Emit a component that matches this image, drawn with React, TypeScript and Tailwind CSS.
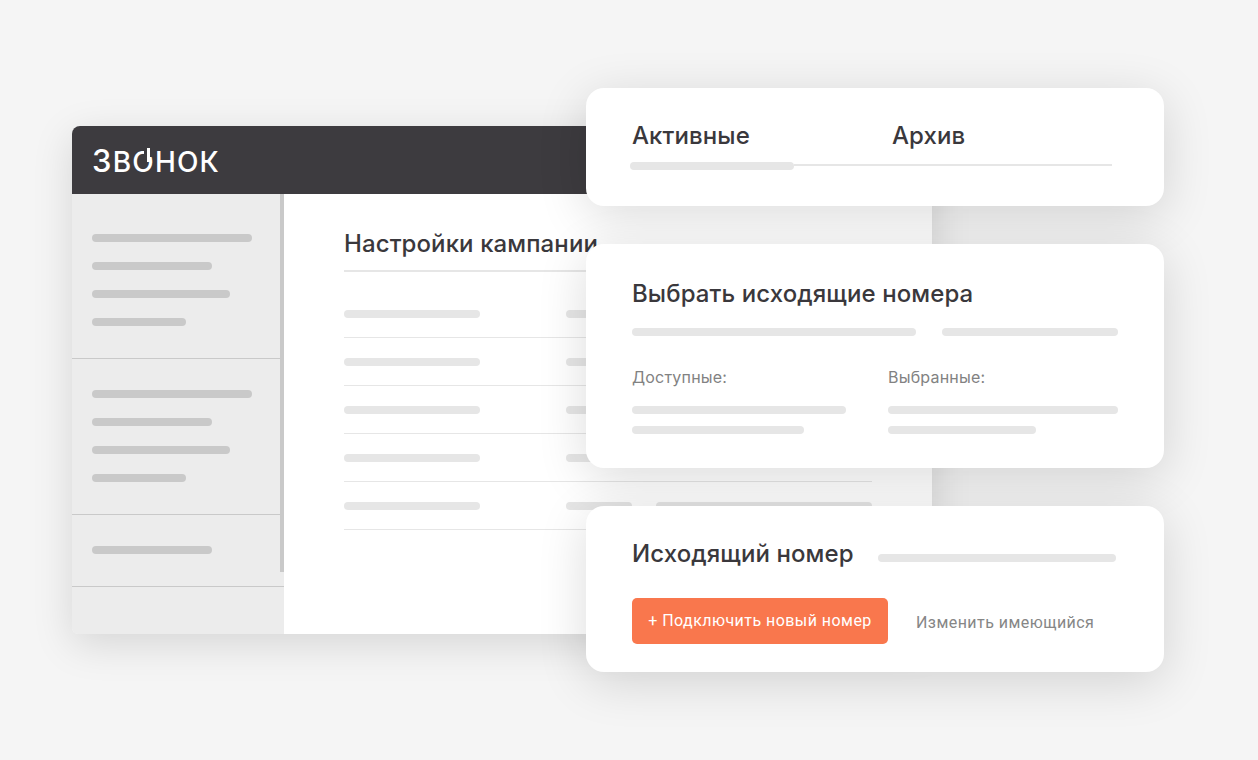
import * as React from "react"

function Bar({ className }: { className: string }) {
  return <div className={`h-2 rounded-full ${className}`} />
}

// sidebar skeleton
function SideGroup({ widths, first }: { widths: string[]; first?: boolean }) {
  return (
    <div className={`flex flex-col gap-5 pl-5 pb-8 ${first ? "pt-10" : "pt-[31px]"}`}>
      {widths.map((w, i) => (
        <Bar key={i} className={`bg-[#c9c9c9] ${w}`} />
      ))}
    </div>
  )
}

function Logo() {
  return (
    <div className="relative ml-5 mt-0.5 h-8 w-[128px] whitespace-nowrap text-[28px] leading-8 font-medium tracking-[1.2px] text-white font-['Inter',sans-serif]">
      <span className="text-[31px]">З</span>ВОНОК
      {/* power symbol on the first O */}
      <span className="absolute left-[52px] top-0 h-3 w-[9px] bg-[#3d3b3f]" />
      <span className="absolute left-[55px] top-[3px] h-[14px] w-[3px] bg-white" />
    </div>
  )
}

function Row() {
  return (
    <div className="flex h-12 border-b border-[#e6e6e6] pt-5">
      <Bar className="w-[136px] bg-[#e6e6e6]" />
      <Bar className="ml-[86px] w-[66px] bg-[#e6e6e6]" />
      <Bar className="ml-6 w-[216px] bg-[#e6e6e6]" />
    </div>
  )
}

function Card({ className, children }: { className: string; children: React.ReactNode }) {
  return (
    <div className={`rounded-[18px] bg-white pl-[46px] shadow-[0_10px_50px_rgba(0,0,0,0.14)] ${className}`}>
      {children}
    </div>
  )
}

const heading = "text-2xl leading-7 font-[550] tracking-[0.1px] text-[#3a383c]"

export default function App() {
  return (
    <div className="relative h-[760px] w-[1258px] overflow-hidden bg-[#f5f5f5] font-['Inter',sans-serif]">
      {/* app window */}
      <div className="absolute left-[72px] top-[126px] flex h-[508px] w-[860px] flex-col overflow-hidden rounded-t-lg rounded-b-md shadow-[0_10px_40px_rgba(0,0,0,0.13)]">
        <div className="flex h-[68px] flex-none items-center bg-[#3d3b3f]">
          <Logo />
        </div>
        <div className="flex flex-1">
          <div className="relative w-[212px] flex-none bg-[#ececec]">
            <div className="h-[165px] border-b border-[#c9c9c9]">
              <SideGroup first widths={["w-40", "w-[120px]", "w-[138px]", "w-[94px]"]} />
            </div>
            <div className="h-[156px] border-b border-[#c9c9c9]">
              <SideGroup widths={["w-40", "w-[120px]", "w-[138px]", "w-[94px]"]} />
            </div>
            <div className="h-[72px] border-b border-[#c9c9c9]">
              <SideGroup widths={["w-[120px]"]} />
            </div>
            {/* scrollbar */}
            <div className="absolute right-0 top-0 h-[378px] w-1 bg-[#c9c9c9]" />
          </div>
          <div className="flex-1 bg-white pl-[60px] pt-9">
            <div className="w-[528px]">
              <div className={`${heading} h-[42px] border-b-2 border-[#e6e6e6]`}>Настройки кампании</div>
              <div className="pt-[18px]">
                {[0, 1, 2, 3, 4].map((i) => (
                  <Row key={i} />
                ))}
              </div>
            </div>
          </div>
        </div>
      </div>

      {/* floating cards */}
      <div className="absolute left-[586px] top-[88px] flex w-[578px] flex-col gap-[38px]">
        <Card className="h-[118px] pt-[34px]">
          <div className={`${heading} flex`}>
            <span className="w-[260px]">Активные</span>
            <span>Архив</span>
          </div>
          <div className="-ml-0.5 mt-3 flex w-[482px] items-start">
            <Bar className="w-[164px] bg-[#e6e6e6]" />
            <div className="mt-0.5 h-0.5 flex-1 bg-[#e6e6e6]" />
          </div>
        </Card>

        <Card className="h-[224px] pt-9">
          <div className={heading}>Выбрать исходящие номера</div>
          <div className="mt-5 flex gap-[26px]">
            <Bar className="w-[284px] bg-[#e6e6e6]" />
            <Bar className="w-[176px] bg-[#e6e6e6]" />
          </div>
          <div className="mt-[31px] flex text-base leading-5 tracking-[0.2px] text-[#828282]">
            <div className="w-64">
              <div>Доступные:</div>
              <Bar className="mt-[19px] w-[214px] bg-[#e6e6e6]" />
              <Bar className="mt-3 w-[172px] bg-[#e6e6e6]" />
            </div>
            <div>
              <div>Выбранные:</div>
              <Bar className="mt-[19px] w-[230px] bg-[#e6e6e6]" />
              <Bar className="mt-3 w-[148px] bg-[#e6e6e6]" />
            </div>
          </div>
        </Card>

        <Card className="h-[166px] pt-[34px]">
          <div className="flex">
            <div className={`${heading} w-[246px]`}>Исходящий номер</div>
            <Bar className="mt-3.5 w-[238px] bg-[#e6e6e6]" />
          </div>
          <div className="mt-[30px] flex items-center">
            <button className="h-[46px] w-64 rounded-[5px] bg-[#f9774d] text-base tracking-[0.45px] text-white font-['Roboto',sans-serif]">
              + Подключить новый номер
            </button>
            <span className="ml-7 mt-1 text-base tracking-[0.45px] text-[#868686] font-['Roboto',sans-serif]">Изменить имеющийся</span>
          </div>
        </Card>
      </div>
    </div>
  )
}
